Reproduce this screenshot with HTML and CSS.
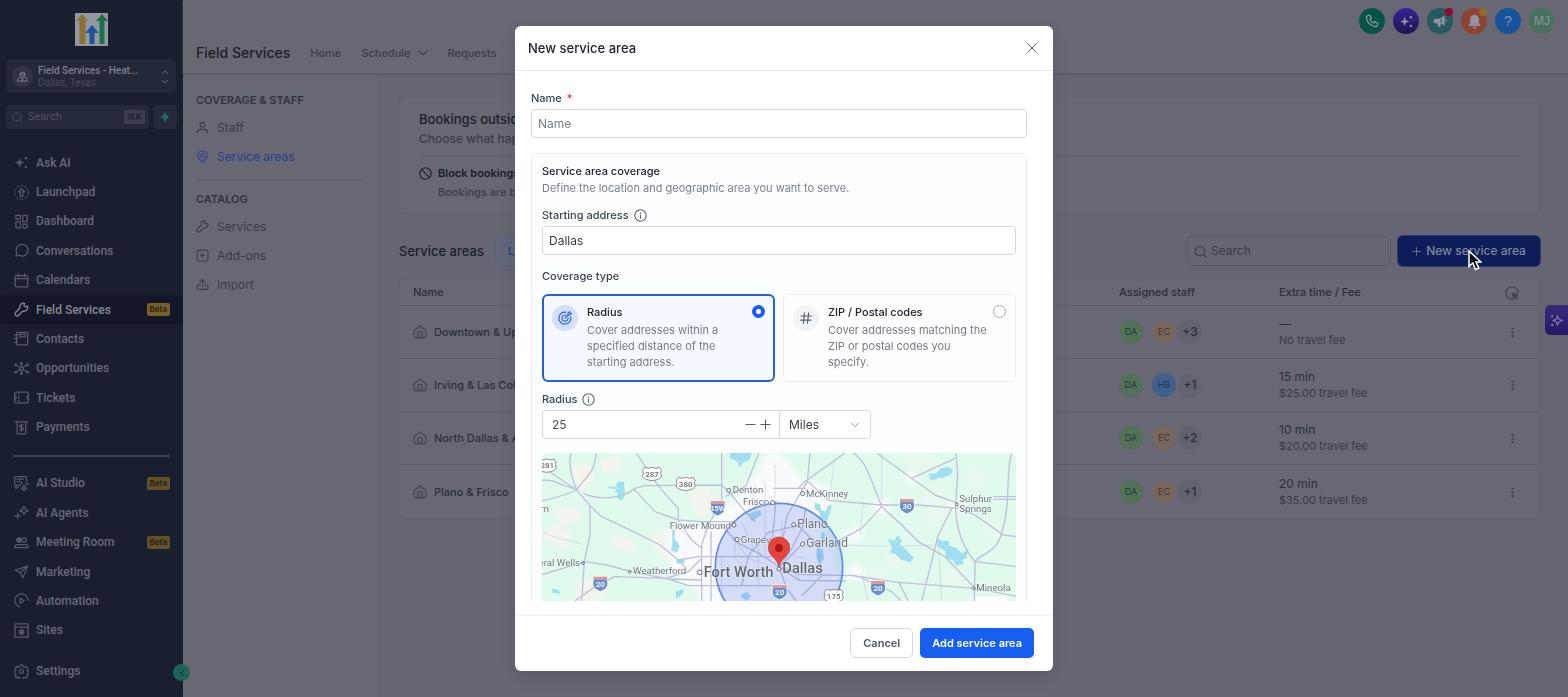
FILE: index.html
```
<!DOCTYPE html>
<html lang="en">
<head>
<meta charset="utf-8">
<meta name="viewport" content="width=device-width, initial-scale=1">
<title>Field Services - New service area</title>
<link rel="stylesheet" href="styles.css">
</head>
<body>
<svg class="sprite" aria-hidden="true">
  <symbol id="i-sparkles" viewBox="0 0 24 24"><path fill="currentColor" stroke="none" d="M9 4.500l2 5.500 5.500 2-5.500 2-2 5.500-2-5.500L1.500 12 7 10z"/><circle cx="19" cy="5" r="2" fill="currentColor" stroke="none"/><circle cx="19" cy="19" r="2" fill="currentColor" stroke="none"/></symbol>
  <symbol id="i-launch" viewBox="0 0 24 24"><circle cx="12" cy="12" r="11" stroke-width="1"/><path d="M12 6l5 5h-3v7h-4v-7H7z"/></symbol>
  <symbol id="i-grid" viewBox="0 0 24 24"><path d="M3 2h7v6H3zM3 12h7v10H3zM14 2h7v10h-7zM14 16h7v6h-7z"/></symbol>
  <symbol id="i-chat" viewBox="0 0 24 24"><path d="M3 21l1.500-5A9.500 9.500 0 1 1 8 19.700z"/></symbol>
  <symbol id="i-cal" viewBox="0 0 24 24"><rect x="2" y="4" width="20" height="18" rx="1.500"/><path d="M2 9h20M7 1v5M17 1v5"/></symbol>
  <symbol id="i-wrench" viewBox="0 0 24 24"><path d="M21.500 6.500l-3.800 1.300-2-2L17 2a6 6 0 0 0-7.500 7.700L2.800 16.500a3.300 3.300 0 0 0 4.700 4.700l6.700-6.700A6 6 0 0 0 21.500 6.500z"/></symbol>
  <symbol id="i-contacts" viewBox="0 0 24 24"><rect x="4" y="2" width="18" height="20" rx="2"/><rect x="9" y="5.500" width="9" height="4"/><path d="M1 6h5M1 12h5M1 18h5M10 2v2"/></symbol>
  <symbol id="i-opp" viewBox="0 0 24 24"><circle cx="12" cy="12" r="3"/><path d="M3 6l6 4M21 6l-6 4M3 18l6-4M21 18l-6-4M12 4v4M12 16v4"/><g fill="currentColor" stroke="none"><circle cx="2.500" cy="6" r="2.300"/><circle cx="21.500" cy="6" r="2.300"/><circle cx="2.500" cy="18" r="2.300"/><circle cx="21.500" cy="18" r="2.300"/><circle cx="12" cy="4" r="2.300"/><circle cx="12" cy="20" r="2.300"/></g></symbol>
  <symbol id="i-ticket" viewBox="0 0 24 24"><rect x="1" y="3.500" width="22" height="17" rx="2"/><path d="M7.500 6v2M7.500 11v2M7.500 16v2M1 9.500a2.500 2.500 0 0 1 0 5M23 9.500a2.500 2.500 0 0 0 0 5"/></symbol>
  <symbol id="i-pay" viewBox="0 0 24 24"><path d="M2 3h20M5 3v19h14V3M14.500 8h-3.500a2 2 0 0 0 0 4h2a2 2 0 0 1 0 4H9.500M12 6.500v11"/></symbol>
  <symbol id="i-studio" viewBox="0 0 24 24"><path d="M10 15H3a2 2 0 0 1-2-2V3a2 2 0 0 1 2-2h15a2 2 0 0 1 2 2v5M5 5h10M5 9h5M3 15v5l4-2M16 15l1.500 3 3 1.500-3 1.500-1.500 3-1.500-3-3-1.500 3-1.500zM12 10v3M21 11v3M19.500 12.500h3"/></symbol>
  <symbol id="i-agents" viewBox="0 0 24 24"><path d="M16 2l2 4.500L22.500 9 18 11l-2 4.500L14 11 9.500 9 14 6.500zM6 13v9M1.500 17.500h9"/></symbol>
  <symbol id="i-meeting" viewBox="0 0 24 24"><circle cx="8" cy="8" r="3.500" fill="currentColor"/><circle cx="16" cy="8" r="3.500"/><path d="M1.500 20c0-3 2-4.500 5-4.500h11c3 0 5 1.500 5 4.500z"/></symbol>
  <symbol id="i-send" viewBox="0 0 24 24"><path d="M22 3L2 10l7.500 4L14 22zM9.500 14L22 3"/></symbol>
  <symbol id="i-auto" viewBox="0 0 24 24"><path d="M9 22A10.500 10.500 0 1 1 22.500 12M10 8.500l6 4-6 4z"/></symbol>
  <symbol id="i-sites" viewBox="0 0 24 24"><rect x="1.500" y="1.500" width="21" height="21"/><path d="M1.500 6.500h21"/><circle cx="12" cy="14.500" r="3.500"/><path d="M8.500 14.500h7M12 11v7"/></symbol>
  <symbol id="i-gear" viewBox="0 0 24 24"><circle cx="12" cy="12" r="3"/><path d="M10 1.500h4l.7 3 2 .9 2.700-1.600 2.800 2.800-1.600 2.700.9 2 3 .7v0l-.1 2.500-2.900.6-.9 2 1.600 2.700-2.800 2.800-2.700-1.600-2 .8-.7 3h-4l-.7-3-2-.8-2.700 1.600-2.800-2.800 1.600-2.700-.9-2-3-.7v-3l3-.7.9-2L1.800 6.600l2.800-2.800 2.700 1.600 2-.9z"/></symbol>
  <symbol id="i-user" viewBox="0 0 24 24"><circle cx="12" cy="7" r="4.500"/><path d="M2.500 22c0-4.500 3-6.500 6-6.500h7c3 0 6 2 6 6.500"/></symbol>
  <symbol id="i-agent" viewBox="0 0 24 24"><circle cx="12" cy="7.500" r="5"/><path d="M2 18c0-2.500 2.500-4 5-4.500l5 4 5-4c2.500.5 5 2 5 4.500v4H2zM7 7h10M12 17.500V22"/></symbol>
  <symbol id="i-pin" viewBox="0 0 24 24"><path d="M12 22.500c3-3 8.500-7 8.500-12.500a8.500 8.500 0 0 0-17 0c0 5.500 5.500 9.500 8.500 12.500z"/><circle cx="12" cy="10" r="3.500"/></symbol>
  <symbol id="i-addon" viewBox="0 0 24 24"><rect x="2" y="2" width="20" height="20" rx="4"/><path d="M12 8v8M8 12h8"/></symbol>
  <symbol id="i-upload" viewBox="0 0 24 24"><path d="M12 16V3M7 7.500L12 2.500l5 5M8 13H5a3 3 0 0 0-3 3v3a2 2 0 0 0 2 2h16a2 2 0 0 0 2-2v-3a3 3 0 0 0-3-3h-3"/></symbol>
  <symbol id="i-search" viewBox="0 0 24 24"><circle cx="11" cy="11" r="9"/><path d="M18 18l4 4"/></symbol>
  <symbol id="i-block" viewBox="0 0 24 24"><circle cx="12" cy="12" r="10.500"/><path d="M4.500 4.500l15 15"/></symbol>
  <symbol id="i-home" viewBox="0 0 24 24"><path d="M2 9.500L12 1.500l10 8V20a2 2 0 0 1-2 2H4a2 2 0 0 1-2-2zM8 22v-7a4 4 0 0 1 8 0v7M12 17v5"/></symbol>
  <symbol id="i-down" viewBox="0 0 24 24"><path d="M3 7.500l9 9 9-9"/></symbol>
  <symbol id="i-plus" viewBox="0 0 24 24"><path d="M12 2v20M2 12h20"/></symbol>
  <symbol id="i-minus" viewBox="0 0 24 24"><path d="M2 12h20"/></symbol>
  <symbol id="i-info" viewBox="0 0 24 24"><circle cx="12" cy="12" r="10.500"/><path d="M12 11v6M12 7v1"/></symbol>
  <symbol id="i-close" viewBox="0 0 24 24"><path d="M3 3l18 18M21 3L3 21"/></symbol>
  <symbol id="i-dots" viewBox="0 0 24 24"><g fill="currentColor" stroke="none"><circle cx="12" cy="4" r="2.500"/><circle cx="12" cy="12" r="2.500"/><circle cx="12" cy="20" r="2.500"/></g></symbol>
</svg>

<div class="app">
  <aside class="sidebar">
    <div class="brand">
      <svg viewBox="0 0 33 33" width="33" height="33" role="img" aria-label="Logo"><path fill="#93979f" d="M0 0h33v33H0z"/><path fill="#8b7137" d="M7 1L1 8h3.500v23h6V8H13z"/><path fill="#1b704d" d="M27 1l-6 7h3.500v23h5V8H33z"/><path fill="#1c559c" d="M17 12l-7 8h4.500v11h5V20H24z"/></svg>
    </div>
    <button class="account" type="button">
      <span class="account-icon"><svg class="ic" width="11" height="11"><use href="#i-agent"/></svg></span>
      <span class="account-text"><b>Field Services - Heat...</b><small>Dallas, Texas</small></span>
      <svg class="updown" viewBox="0 0 8 14" width="8" height="14"><path d="M1 4L4 1l3 3M1 10l3 3 3-3"/></svg>
    </button>
    <div class="quick">
      <label class="quick-search"><svg class="ic" width="11" height="11"><use href="#i-search"/></svg><input type="search" placeholder="Search" aria-label="Search"><kbd>⌘K</kbd></label>
      <button class="quick-btn" type="button" aria-label="Quick actions"><svg viewBox="0 0 12 12" width="12" height="12"><path d="M6 0Q7 5 11 6 7 7 6 12 5 7 1 6 5 5 6 0z"/></svg></button>
    </div>
    <nav class="menu menu-top">
      <a href="#"><svg class="ic" width="15" height="15"><use href="#i-sparkles"/></svg>Ask AI</a>
      <a href="#"><svg class="ic" width="15" height="15"><use href="#i-launch"/></svg>Launchpad</a>
      <a href="#"><svg class="ic" width="15" height="15"><use href="#i-grid"/></svg>Dashboard</a>
      <a href="#"><svg class="ic" width="15" height="15"><use href="#i-chat"/></svg>Conversations</a>
      <a href="#"><svg class="ic" width="15" height="15"><use href="#i-cal"/></svg>Calendars</a>
      <a href="#" class="active"><svg class="ic" width="15" height="15"><use href="#i-wrench"/></svg>Field Services<span class="beta">Beta</span></a>
      <a href="#"><svg class="ic" width="15" height="15"><use href="#i-contacts"/></svg>Contacts</a>
      <a href="#"><svg class="ic" width="15" height="15"><use href="#i-opp"/></svg>Opportunities</a>
      <a href="#"><svg class="ic" width="15" height="15"><use href="#i-ticket"/></svg>Tickets</a>
      <a href="#"><svg class="ic" width="15" height="15"><use href="#i-pay"/></svg>Payments</a>
    </nav>
    <hr class="menu-line">
    <nav class="menu menu-bottom">
      <a href="#"><svg class="ic" width="15" height="15"><use href="#i-studio"/></svg>AI Studio<span class="beta">Beta</span></a>
      <a href="#"><svg class="ic" width="15" height="15"><use href="#i-agents"/></svg>AI Agents</a>
      <a href="#"><svg class="ic" width="15" height="15"><use href="#i-meeting"/></svg>Meeting Room<span class="beta">Beta</span></a>
      <a href="#"><svg class="ic" width="15" height="15"><use href="#i-send"/></svg>Marketing</a>
      <a href="#"><svg class="ic" width="15" height="15"><use href="#i-auto"/></svg>Automation</a>
      <a href="#"><svg class="ic" width="15" height="15"><use href="#i-sites"/></svg>Sites</a>
    </nav>
    <nav class="menu menu-settings"><a href="#"><svg class="ic" width="15" height="15"><use href="#i-gear"/></svg>Settings</a></nav>
    <button class="collapse" type="button" aria-label="Collapse sidebar"><svg viewBox="0 0 8 8" width="8" height="8"><path d="M5.500 1L2.500 4l3 3"/></svg></button>
  </aside>

  <div class="page">
    <header class="topbar">
      <div class="actions">
        <button class="round phone" type="button" aria-label="Phone"><svg viewBox="0 0 24 24" width="14" height="14"><path class="line" d="M4 3l4-1 3 5-2.500 2.500a14 14 0 0 0 6 6L17 13l5 3-1 4c-.5 1.500-2 2-4 1.500C10 20 4 14 2.500 7 2 5 2.500 3.500 4 3z"/></svg></button>
        <button class="round ai" type="button" aria-label="Ask AI"><svg class="ic" width="15" height="15"><use href="#i-sparkles"/></svg></button>
        <button class="round news" type="button" aria-label="Announcements"><svg viewBox="0 0 24 24" width="14" height="14"><path d="M20 2v18l-7-4v6h-4l-2-6H4a3 3 0 0 1-3-3v-2a3 3 0 0 1 3-3h8zM21.500 9v4h2V9z"/><path class="cut" d="M14 9v5"/></svg><i class="dot red"></i></button>
        <button class="round bell" type="button" aria-label="Notifications"><svg viewBox="0 0 24 24" width="15" height="15"><path d="M12 1c-4.500 0-7 3.500-7 7v6l-3 5h20l-3-5V8c0-3.500-2.500-7-7-7zM9 20.500h6a3 3 0 0 1-6 0z"/></svg><i class="dot amber"></i></button>
        <button class="round help" type="button" aria-label="Help">?</button>
        <button class="round me" type="button">MJ</button>
      </div>
      <nav class="tabs">
        <h1>Field Services</h1>
        <a href="#">Home</a>
        <a href="#">Schedule<svg class="ic" width="10" height="10"><use href="#i-down"/></svg></a>
        <a href="#">Requests</a>
        <a href="#">Estimates</a>
      </nav>
    </header>

    <div class="columns">
      <aside class="subnav">
        <h2>COVERAGE &amp; STAFF</h2>
        <a href="#"><svg class="ic" width="13" height="13"><use href="#i-user"/></svg>Staff</a>
        <a href="#" class="current"><svg class="ic" width="13" height="13"><use href="#i-pin"/></svg>Service areas</a>
        <hr>
        <h2>CATALOG</h2>
        <a href="#"><svg class="ic" width="13" height="13"><use href="#i-wrench"/></svg>Services</a>
        <a href="#"><svg class="ic" width="13" height="13"><use href="#i-addon"/></svg>Add-ons</a>
        <a href="#"><svg class="ic" width="13" height="13"><use href="#i-upload"/></svg>Import</a>
      </aside>

      <main class="content">
        <section class="card">
          <h2>Bookings outside service areas</h2>
          <p>Choose what happens when an address is not covered</p>
          <div class="rule">
            <svg class="ic" width="13" height="13"><use href="#i-block"/></svg>
            <div><h3>Block bookings</h3><p>Bookings are blocked outside your areas</p></div>
          </div>
        </section>

        <div class="toolbar">
          <h2>Service areas</h2>
          <button class="view" type="button">List</button>
          <label class="search"><svg class="ic" width="13" height="13"><use href="#i-search"/></svg><input type="search" placeholder="Search" aria-label="Search service areas"></label>
          <button class="new" type="button"><svg class="ic" width="9" height="9"><use href="#i-plus"/></svg>New service area</button>
        </div>

        <table class="areas">
          <thead><tr><th>Name</th><th class="c-staff">Assigned staff</th><th class="c-fee">Extra time / Fee</th><th class="c-act"><svg viewBox="0 0 24 24" class="ic" width="14" height="14"><path d="M13 22.500A10.500 10.500 0 1 1 22.500 13"/><path fill="currentColor" d="M12 12l4 10 2-4 4-2z"/><path d="M17 17l5 5"/></svg></th></tr></thead>
          <tbody>
            <tr><td><span class="area"><svg class="ic" width="14" height="14"><use href="#i-home"/></svg>Downtown &amp; Uptown</span></td><td><span class="people"><i class="da">DA</i><i class="ec">EC</i><b>+3</b></span></td><td>—<small>No travel fee</small></td><td class="c-act"><button type="button" aria-label="More"><svg class="ic" width="11" height="11"><use href="#i-dots"/></svg></button></td></tr>
            <tr><td><span class="area"><svg class="ic" width="14" height="14"><use href="#i-home"/></svg>Irving &amp; Las Colinas</span></td><td><span class="people"><i class="da">DA</i><i class="hb">HB</i><b>+1</b></span></td><td>15 min<small>$25.00 travel fee</small></td><td class="c-act"><button type="button" aria-label="More"><svg class="ic" width="11" height="11"><use href="#i-dots"/></svg></button></td></tr>
            <tr><td><span class="area"><svg class="ic" width="14" height="14"><use href="#i-home"/></svg>North Dallas &amp; Addison</span></td><td><span class="people"><i class="da">DA</i><i class="ec">EC</i><b>+2</b></span></td><td>10 min<small>$20.00 travel fee</small></td><td class="c-act"><button type="button" aria-label="More"><svg class="ic" width="11" height="11"><use href="#i-dots"/></svg></button></td></tr>
            <tr><td><span class="area"><svg class="ic" width="14" height="14"><use href="#i-home"/></svg>Plano &amp; Frisco</span></td><td><span class="people"><i class="da">DA</i><i class="ec">EC</i><b>+1</b></span></td><td>20 min<small>$35.00 travel fee</small></td><td class="c-act"><button type="button" aria-label="More"><svg class="ic" width="11" height="11"><use href="#i-dots"/></svg></button></td></tr>
          </tbody>
        </table>
      </main>
    </div>
  </div>
  <button class="edge" type="button" aria-label="Assistant"><svg viewBox="0 0 12 12" width="13" height="13"><path d="M7 2l1.200 2.800L11 6 8.200 7.200 7 10 5.800 7.200 3 6l2.800-1.200zM2 1v2M1 2h2M2 9v2M1 10h2"/></svg></button>
</div>

<div class="backdrop">
  <form class="dialog" role="dialog" aria-modal="true" aria-labelledby="dlg-title">
    <header class="dialog-head">
      <h2 id="dlg-title">New service area</h2>
      <button type="button" class="close" aria-label="Close"><svg class="ic" width="12" height="12"><use href="#i-close"/></svg></button>
    </header>
    <div class="dialog-body">
      <label class="label" for="name">Name <em>*</em></label>
      <input class="field" id="name" type="text" placeholder="Name">
      <section class="panel">
        <h3>Service area coverage</h3>
        <p class="hint">Define the location and geographic area you want to serve.</p>
        <label class="label" for="addr">Starting address <svg class="ic" width="13" height="13"><use href="#i-info"/></svg></label>
        <input class="field" id="addr" type="text" value="Dallas">
        <div class="label type-label" id="ctype">Coverage type</div>
        <div class="types" role="radiogroup" aria-labelledby="ctype">
          <label class="type chosen">
            <span class="type-icon"><svg class="ic" viewBox="0 0 24 24" width="14" height="14"><path d="M14 2.200A10.200 10.200 0 1 0 21.800 10M13 7a5.300 5.300 0 1 0 4.200 4M12 12l5-5M17 7V4l3-3 .5 2.500L23 4l-3 3z"/></svg></span>
            <span class="type-text"><b>Radius</b><span>Cover addresses within a specified distance of the starting address.</span></span>
            <input type="radio" name="type" checked>
          </label>
          <label class="type">
            <span class="type-icon"><svg class="ic" viewBox="0 0 24 24" width="14" height="14"><path d="M9.500 3l-2 18M16.500 3l-2 18M3.500 8.500h18M2.500 15.500h18"/></svg></span>
            <span class="type-text"><b>ZIP / Postal codes</b><span>Cover addresses matching the ZIP or postal codes you specify.</span></span>
            <input type="radio" name="type">
          </label>
        </div>
        <label class="label" for="radius">Radius <svg class="ic" width="13" height="13"><use href="#i-info"/></svg></label>
        <div class="radius">
          <div class="number">
            <input id="radius" type="number" value="25">
            <button type="button" aria-label="Decrease"><svg class="ic" width="11" height="11"><use href="#i-minus"/></svg></button>
            <button type="button" aria-label="Increase"><svg class="ic" width="11" height="11"><use href="#i-plus"/></svg></button>
          </div>
          <div class="unit"><select aria-label="Unit"><option>Miles</option><option>Kilometers</option></select><svg class="ic" width="10" height="10"><use href="#i-down"/></svg></div>
        </div>
        <svg class="map" viewBox="18 24 1428 600" preserveAspectRatio="xMidYMin slice" role="img" aria-label="Map of the covered area">
          <defs>
            <filter id="soft" x="-20%" y="-20%" width="140%" height="140%"><feGaussianBlur stdDeviation="7"/></filter>
            <g id="interstate"><path d="M-21-20h42v9c6 19-2 28-21 36c-19-8-27-17-21-36z" fill="#6a8fca" stroke="#fff" stroke-width="3"/><path d="M-21-20h42v9h-42z" fill="#df9a9c"/></g>
            <path id="usroute" d="M-22-20q10 6 22 0q12 6 22 0l6 9q-5 9 1 17q-4 11-29 14q-25-3-29-14q6-8 1-17z" fill="#fff" stroke="#77777c" stroke-width="2.500"/>
          </defs>
          <path fill="#e1faee" d="M0 0h1500v700H0z"/>
          <g fill="#f4f4ee" filter="url(#soft)">
            <path d="M110 70l50-20 20 60-50 30zM60 190l60-10 20 40-60 20zM230 270l60 10 20 40-70-10zM120 410l80-10 20 60-90 10zM50 240l60 20-20 50-70-30zM190 50l60-20 10 40-50 20zM340 280l80-40 30 80-60 30zM460 150l60-30 30 80-60 20z"/>
            <path d="M1090 30l90-10 40 50-60 30zM1160 130l60-20 20 90-60 60zM1300 60l60 20-10 60-70-20zM1340 210l90 20-30 60-60-20zM1060 300l60 10-20 70-60-30zM980 360l80 10-20 50-70-20zM1220 380l60-10 30 50-70 20z" opacity=".4"/>
          </g>
          <g fill="#f8fafb" filter="url(#soft)">
            <path d="M390 270l50-50 60 30 70-60 50-60 50-50 20-50 40-10 80 90 60 10 30 30-30 60-20 60 40 50 20 80-10 60-10 80H500l-10-100-80-50z"/>
            <circle cx="1040" cy="185" r="24"/><circle cx="1130" cy="100" r="18"/><circle cx="960" cy="385" r="24"/><circle cx="1262" cy="180" r="20"/><path d="M920 270l50-30 20 30-50 30z"/>
          </g>
          <path fill="#fcfcfc" d="M1320 455h100v30h-100z"/>
          <g fill="#a0dff0">
            <path d="M245 112l22-2 3 40-10 18-14-8 2-16-12-4 8-4zM218 124l24 2 2 6-22-2zM585 24h66l-8 22-18 6-10 16-10-20-22-8zM412 252l8 2-2 26 16 22-8 22-18-8 4-20zM640 206l36-10 4 14-30 18zM422 345l26 0 2 8-22 4zM50 430l20 5 6 12-24-4zM422 440l24-8-2 14-22 16zM616 452l20-12 12 14-14 14zM590 280l14-6-2 20z"/>
            <path d="M1175 88l30-4 12-14 24-4 12 8-4 14-24 10-16 0-12 8-16-4 6-10zM840 172l16 8 2 16 14 4 8-20 10 2-6 28-12 24-14-6-4-26-14-10zM1058 282l22 4 8-16 14 18-8 10 22 18 20 22-10 14-28-8-18-18-16-2 8-16zM1204 278l18 10 18 0 4 14 20 6 18 18 20-16-8 30-12 4 4 12-22 6-12-18-18-4-4-22-22-14zM845 310l18 2 4 30-14 14-8-14zM862 262l8 4-4 20-8-8z"/>
          </g>
          <g fill="none" stroke="#c8cfe0" stroke-width="2">
            <path d="M18 255C60 290 110 280 145 300M430 250l70 60M660 120v110M690 110v220M720 60v100M900 40l-20 130M1040 185V24M1210 300l10 168M920 300l140 4M1060 304l160-4M1000 468l-20-80M985 170l-10 100M580 260l60 80 60 20M620 230l40 90M670 300v130M560 330v138M600 280v60l60 60M700 260l40 60 60 20M740 230v100l60 80"/>
          </g>
          <g fill="none" stroke="#bec2d8" stroke-width="4" stroke-linejoin="round">
            <path d="M18 105L50 107 125 135M40 78L125 135M18 168Q80 155 125 135M108 24C98 60 114 110 125 135M183 24C180 90 145 100 125 135M125 135l40 47v88l-17 80-8 118M165 182l35 33 100 47 75 38 55 45 20 20M145 145C190 165 260 165 300 130l30-8 230-2M305 24C340 80 370 130 430 190v35M298 133l62 67 70 25 70 5 100 0M18 390l132-40 65 10 75 20 110 22 100 3M120 468l60-43 60-30 160 5M560 24v96l30 30 40 50 30 30M672 24l-40 100-60 30M430 225l40 60 30 25M500 468V300l20-60 40-70v-50M528 468V260M430 345l60-10h240M400 402l60 20 280 0M385 402l75-22 40-40"/>
            <path d="M825 24l-8 86-60 100-20 100M790 130l20-20L930 24M715 130h100M955 24c30 20 40 40 85 161M820 110l60 56 160 14M1040 180h110l120 10M1025 24l105 76 70 50 70 25M1263 24l5 60-6 100c0 70 25 130 58 166l126 15M905 290l75-40 60-65 60 55 50 50 80 45 90 95M1250 190l-40 80-50 198M1265 180l70 40 70 50 41 5M1430 24c-20 60 0 150-30 240-15 60-60 60-80 86l-2 118M940 390l150 22 230 18 126 24M733 366l60 22 147 4M733 366l60 40 140 2M960 390l110 50 30 28M1090 410l30 58M1130 100l130-60M1375 155h71M1375 163h71M733 366l40-60 30-60 10-60M733 366l-60-40-60-30-60-60M733 366l-20-90 10-110M733 366l70-70M733 366l20 60 30 42M620 422l20-90 60-70 90-20 60 60 10 90-60 60"/>
          </g>
          <circle cx="732" cy="366" r="191" fill="#4a64f0" fill-opacity=".2" stroke="#6388ea" stroke-width="5"/>
          <g class="shields">
            <use href="#usroute" x="35" y="62"/><text x="37" y="70">281</text>
            <use href="#usroute" x="351" y="87"/><text x="351" y="95">287</text>
            <use href="#usroute" x="452" y="117"/><text x="452" y="125">380</text>
            <use href="#usroute" x="896" y="453"/><text x="896" y="461">175</text>
          </g>
          <g class="shields white">
            <use href="#interstate" x="548" y="188"/><text x="548" y="198">35W</text>
            <use href="#interstate" x="196" y="415"/><text x="196" y="425">20</text>
            <use href="#interstate" x="1116" y="182"/><text x="1116" y="192">30</text>
            <use href="#interstate" x="1029" y="428"/><text x="1029" y="438">20</text>
            <use href="#interstate" x="734" y="440"/><text x="734" y="450">20</text>
          </g>
          <g fill="#fff" stroke="#666b75" stroke-width="3"><circle cx="581" cy="136" r="6"/><circle cx="713" cy="173" r="6"/><circle cx="597" cy="240" r="6"/><circle cx="606" cy="284" r="6"/><circle cx="803" cy="146" r="6"/><circle cx="776" cy="239" r="6"/><circle cx="803" cy="297" r="6"/><circle cx="494" cy="382" r="7"/><circle cx="144" cy="354" r="4"/><circle cx="284" cy="380" r="4"/><circle cx="1317" cy="430" r="4"/><circle cx="1265" cy="178" r="4"/></g>
          <g class="places">
            <text x="593" y="145">Denton</text><text x="624" y="181">Frisco</text><text x="404" y="252">Flower Mound</text><text x="617" y="293">Grapevine</text><text x="294" y="388">Weatherford</text><text x="135" y="362" text-anchor="end">Mineral Wells</text><text x="42" y="202" text-anchor="end">Graham</text>
            <text x="813" y="155">McKinney</text><text x="1273" y="172">Sulphur</text><text x="1273" y="202">Springs</text><text x="1324" y="439">Mineola</text>
            <text class="mid" x="787" y="249">Plano</text><text class="mid" x="814" y="306">Garland</text>
            <text class="big" x="506" y="396">Fort Worth</text><text class="big" x="742" y="384">Dallas</text>
          </g>
          <path fill="#e8453a" stroke="#c5302a" stroke-width="2" d="M732 366c-4-28-32-32-32-58a32 32 0 0 1 64 0c0 26-28 30-32 58z"/><circle cx="732" cy="309" r="12" fill="#a91818"/><circle cx="732" cy="372" r="6" fill="#fff" stroke="#666b75" stroke-width="3"/>
        </svg>
      </section>
    </div>
    <footer class="dialog-foot">
      <button type="button" class="cancel">Cancel</button>
      <button type="submit" class="submit">Add service area</button>
    </footer>
  </form>
</div>
<svg class="pointer" viewBox="0 0 14 21" width="14" height="21" aria-hidden="true"><path d="M1 1v15.500l3.800-3.500 2.700 6.500 3.200-1.300L8 12h5z" fill="#111" stroke="#fff" stroke-width="1.500"/></svg>
</body>
</html>
```
FILE: styles.css
```
:root {
  --page: #656671;
  --surface: #676873;
  --line: #5d5e6a;
  --ink: #1a1e2b;
  --ink-2: #2a2e3c;
  --ink-3: #393d4b;
  --side: #1a1f2f;
  --side-text: #666a77;
}
* { box-sizing: border-box; }
body { margin: 0; font: 11px/16px Inter, "Liberation Sans", sans-serif; color: var(--ink); background: var(--page); }
h1, h2, h3, p { margin: 0; font-size: 11px; font-weight: 500; }
a { color: inherit; text-decoration: none; }
button, input, select { font: inherit; color: inherit; }
button { border: 0; padding: 0; background: none; cursor: pointer; }
input { min-width: 0; }
input[type="search"] { appearance: none; border: 0; padding: 0; background: none; flex: 1; outline: 0; }
.sprite { position: absolute; width: 0; height: 0; }
.ic { flex: none; fill: none; stroke: currentColor; stroke-width: 2; stroke-linecap: round; stroke-linejoin: round; }

.app { display: flex; height: 100vh; overflow: hidden; }

/* Main sidebar */
.sidebar { position: relative; flex: none; width: 183px; display: flex; flex-direction: column; background: var(--side); color: var(--side-text); font-family: Roboto, sans-serif; }
.brand { display: flex; justify-content: center; padding: 13px 0; }
.account { display: flex; align-items: center; gap: 5px; height: 34px; margin: 0 7px 0 6px; padding: 1px 7px 0 6px; border-radius: 5px; background: #242938; text-align: left; }
.account-icon { display: grid; place-items: center; width: 21px; height: 21px; border-radius: 50%; background: #313543; color: #81848d; }
.account-text { flex: 1; display: flex; flex-direction: column; line-height: 12px; font-size: 10px; }
.account-text b { font-weight: 500; color: #7c7f8a; }
.account-text small { font-size: 10px; color: #474c5a; }
.updown { fill: none; stroke: #6a6e7a; }
.quick { display: flex; gap: 4px; height: 24px; margin: 12px 6px 0; }
.quick-search { flex: 1; display: flex; align-items: center; gap: 5px; padding: 0 4px 0 6px; border-radius: 4px; background: #252a39; color: #4c505e; min-width: 0; }
.quick-search input::placeholder { color: #4c505e; }
.quick-search input { width: 20px; }
kbd { padding: 0 3px; border-radius: 2px; background: #3b3f4c; color: #1d2130; font: 600 9px/14px Inter, "DejaVu Sans", sans-serif; }
.quick-btn { display: grid; place-items: center; width: 24px; border-radius: 4px; background: #252a39; fill: #21695f; }
.menu { display: flex; flex-direction: column; font-size: 12px; font-weight: 500; }
.menu a { flex: 1; display: flex; align-items: center; gap: 7px; padding: 0 13px 0 14px; }
.menu .ic { stroke-width: 2; color: #565b69; }
.menu .active { background: #131728; border-radius: 3px; color: #868992; }
.menu .active .ic { color: #868992; }
.menu-top { flex: 10; margin-top: 19px; }
.menu-line { height: 2px; width: auto; margin: 13px 13px 12px; border: 0; background: #3b404e; }
.menu-bottom { flex: 6; }
.menu-settings { height: 52px; }
.beta { margin-left: auto; padding: 0 3px; border-radius: 2px; background: #635027; color: #252219; font: 600 8px/13px Inter, sans-serif; }
.active .beta { background: #77612a; }
.collapse { position: absolute; right: -7px; bottom: 16px; width: 17px; height: 17px; display: grid; place-items: center; border-radius: 50%; background: #1d6359; }
.collapse svg { fill: none; stroke: #10233a; stroke-width: 1; }

/* Page header */
.page { flex: 1; min-width: 0; display: flex; flex-direction: column; background: var(--surface); }
.topbar { height: 74px; border-bottom: 1px solid #5c5d69; box-shadow: 0 1px 2px #5c5d69; position: relative; }
.actions { display: flex; justify-content: flex-end; gap: 8px; padding: 8px 13px 0 0; }
.round { position: relative; display: grid; place-items: center; width: 26px; height: 26px; border-radius: 50%; color: #8d90a0; font: 12px/16px "Liberation Sans", sans-serif; fill: #90939f; }
.round .line { fill: none; stroke: #8f9a9f; stroke-width: 2; }
.round .cut { stroke: #255a5d; stroke-width: 2; }
.phone { background: #075445; }
.ai { background: linear-gradient(#38249a, #201350); }
.news { background: #265a5e; }
.bell { background: #8e4332; }
.help { background: #18529a; font-size: 14px; }
.me { background: #4b7060; }
.dot { position: absolute; top: 0; right: 0; width: 8px; height: 8px; border-radius: 50%; }
.red { background: #97062c; }
.amber { background: #95682a; }
.tabs { display: flex; align-items: center; height: 24px; margin-top: 7px; padding-left: 13px; gap: 20px; font-weight: 500; color: var(--ink-3); }
.tabs h1 { font: 500 14px/20px Inter, sans-serif; color: var(--ink); }
.tabs a { display: flex; align-items: center; gap: 7px; }
.tabs .ic { stroke-width: 3; }
.columns { flex: 1; display: flex; min-height: 0; }

/* Section navigation */
.subnav { flex: none; width: 196px; padding: 18px 16px 0 13px; border-right: 1px solid #61626e; display: flex; flex-direction: column; color: var(--ink-3); }
.subnav h2 { font-weight: 600; margin-bottom: 5px; color: #2f3341; }
.subnav a { display: flex; align-items: center; gap: 8px; height: 29px; font-size: 12px; }
.subnav .current { color: #22418d; }
.subnav hr { width: 100%; margin: 9px 0 10px; border: 0; border-top: 1px solid var(--line); }

/* Content */
.content { flex: 1; min-width: 0; padding: 22px 28px 0 20px; background: var(--page); }
.card { padding: 13px 19px 13px; border: 1px solid #61626e; border-radius: 6px; background: var(--surface); }
.card h2 { font-size: 13px; line-height: 18px; }
.card p { color: var(--ink-3); margin-top: 3px; }
.card > p { font-size: 12px; }
.rule { display: flex; gap: 6px; margin-top: 9px; padding-top: 8px; border-top: 1px solid var(--line); }
.rule .ic { margin-top: 2px; }
.card h3 { font-weight: 600; }
.toolbar { display: flex; align-items: center; height: 30px; margin-top: 22px; }
.toolbar h2 { font-size: 13px; }
.view { height: 30px; margin-left: 11px; padding: 0 12px; border: 1px solid #596075; border-radius: 5px; background: #616778; color: #173a92; font-weight: 500; }
.search { display: flex; align-items: center; gap: 4px; width: 204px; height: 30px; margin-left: auto; padding: 0 6px; border: 1px solid #585a66; border-radius: 5px; color: var(--ink-3); font-size: 12px; }
.search input::placeholder { color: var(--ink-3); }
.new { display: flex; align-items: center; justify-content: center; gap: 5px; width: 142px; height: 30px; margin-left: 7px; border-radius: 5px; background: #0d1d57; color: #7f86a2; font-size: 12px; font-weight: 500; box-shadow: 0 0 0 1px #2a3a72; }
.new .ic { stroke-width: 2; }
.areas { width: 100%; margin-top: 12px; border: 1px solid #61626e; border-radius: 6px; border-spacing: 0; background: var(--surface); table-layout: fixed; }
.areas th { height: 27px; padding: 0 13px; text-align: left; font-weight: 500; color: var(--ink-2); border-bottom: 1px solid var(--line); }
.areas td { height: 53px; padding: 0 13px; border-bottom: 1px solid var(--line); color: var(--ink-2); font-size: 12px; }
.areas tr:last-child td { border-bottom: 0; }
.c-staff { width: 160px; }
.c-fee { width: 219px; }
.areas .c-act { width: 54px; text-align: center; color: #3d414e; }
.c-act svg { vertical-align: middle; }
.areas small { display: block; font-size: 11px; color: #363a48; }
.area { display: flex; align-items: center; gap: 7px; font-size: 11px; font-weight: 500; }
.area .ic { stroke-width: 2; color: #40444f; }
.people { display: flex; align-items: center; }
.people i { width: 24px; height: 24px; margin-right: 9px; border-radius: 50%; font: 9px/24px Inter, sans-serif; text-align: center; }
.people b { width: 24px; height: 24px; margin-left: -7px; border-radius: 50%; background: #61636f; font: 500 12px/24px Inter, sans-serif; text-align: center; }
.da { background: #537158; color: #1c3b38; }
.ec { background: #76665d; color: #493632; }
.hb { background: #42608c; color: #1b3767; }
.edge { position: absolute; right: 0; top: 305px; width: 23px; height: 30px; display: grid; place-items: center; border-radius: 5px 0 0 5px; background: linear-gradient(#3b2979, #2a1767); }
.edge svg { fill: none; stroke: #8b87b0; }

/* Dialog */
.backdrop { position: fixed; inset: 0; display: flex; justify-content: center; padding: 26px 0; }
.dialog { width: 538px; display: flex; flex-direction: column; border-radius: 6px; background: #fff; box-shadow: 0 6px 16px rgba(20, 24, 40, .12); overflow: hidden; }
.dialog-head { flex: none; display: flex; align-items: center; justify-content: space-between; height: 45px; padding: 0 15px 0 13px; border-bottom: 1px solid #e6e7e9; }
.dialog-head h2 { font-size: 13px; color: #20242e; }
.close { display: flex; color: #5c616b; }
.dialog-body { flex: 1; min-height: 0; overflow: hidden; margin-bottom: 13px; padding: 19px 26px 0 16px; }
.label { display: flex; align-items: center; gap: 5px; height: 16px; margin-bottom: 3px; font-weight: 500; color: #3c4552; }
.label em { font-style: normal; color: #d92d20; }
.label .ic { color: #5c636f; }
.field { display: block; width: 100%; height: 29px; padding: 0 6px; border: 1px solid #d5d7db; border-radius: 4px; background: #fff; color: #343a44; outline: 0; font-size: 12px; }
.field::placeholder { color: #7b808a; }
.panel { margin-top: 15px; padding: 9px 10px 12px; border: 1px solid #e9ecec; border-radius: 5px; background: #fbfefd; }
.panel h3 { color: #20242e; }
.hint { margin: 1px 0 11px; font-weight: 400; color: #7a808a; }
.type-label { margin: 13px 0 10px; }
.types { display: grid; grid-template-columns: 1fr 1fr; gap: 8px; margin-bottom: 9px; }
.type { display: flex; align-items: flex-start; gap: 9px; height: 88px; padding: 9px 9px 0; border: 1px solid #e9ebed; border-radius: 6px; background: #fefefe; }
.type.chosen { padding: 8px 8px 0; border: 2px solid #2560dc; background: #f5f8fe; }
.type-icon { flex: none; display: grid; place-items: center; width: 26px; height: 26px; margin-top: 1px; border-radius: 50%; background: #f2f3f4; color: #5a606a; }
.chosen .type-icon { background: #d3e0fb; color: #2a5fd0; }
.type-text { flex: 1; margin-right: -9px; color: #757b86; }
.type-text b { display: block; margin-bottom: 2px; font-weight: 500; color: #20242e; }
.type input { appearance: none; flex: none; width: 13px; height: 13px; margin: 1px 0 0; border: 1px solid #a3a8b0; border-radius: 50%; background: #fff; }
.type input:checked { border: 4px solid #155eef; }
.radius { display: flex; width: 329px; height: 29px; border: 1px solid #d5d7db; border-radius: 4px; background: #fff; color: #474d58; font-size: 12px; }
.number { flex: 1; min-width: 0; display: flex; align-items: center; gap: 4px; padding: 0 8px 0 9px; border-right: 1px solid #d5d7db; }
.number input { flex: 1; border: 0; padding: 0; outline: 0; background: none; appearance: textfield; }
.number input::-webkit-inner-spin-button { appearance: none; }
.number button { display: flex; }
.unit { flex: none; position: relative; width: 90px; }
.unit select { width: 100%; height: 100%; padding: 0 9px; border: 0; background: none; appearance: none; outline: 0; color: #343a44; }
.unit .ic { position: absolute; right: 10px; top: 9px; color: #8a8f98; pointer-events: none; }
.map { display: block; width: 100%; height: 200px; margin-top: 14px; border-radius: 5px; font-family: Roboto, sans-serif; }
.places { font-size: 29px; fill: #6f737c; stroke: #fff; stroke-width: 3; stroke-opacity: .6; paint-order: stroke; }
.places .mid { font-size: 36px; }
.places .big { font-size: 44px; fill: #62666f; font-weight: 500; }
.shields { font-size: 24px; font-weight: 500; fill: #6b6d72; text-anchor: middle; }
.white { fill: #fff; }
.dialog-foot { flex: none; display: flex; justify-content: flex-end; gap: 7px; padding: 12px 19px 13px; border-top: 2px solid #f3f3f4; font-weight: 600; }
.dialog-foot button { height: 30px; padding: 0 12px; border-radius: 5px; }
.dialog-foot .cancel { border: 1px solid #d5d7db; color: #525761; }
.submit { background: #155eef; color: #fff; }
.pointer { position: fixed; left: 1468px; top: 250px; }
```
